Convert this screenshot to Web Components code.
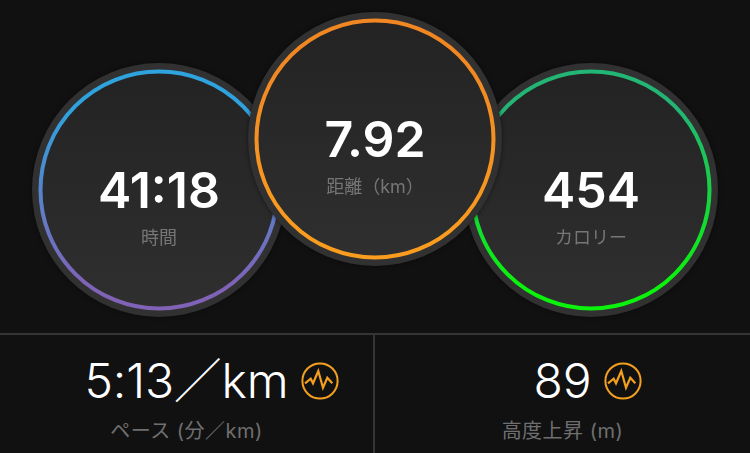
<!DOCTYPE html>
<html lang="ja">
<head>
<meta charset="utf-8">
<style>
  html, body { margin: 0; padding: 0; background: #111112; }
  body { width: 750px; height: 453px; overflow: hidden; font-family: Inter, "Noto Sans CJK JP", sans-serif; }
</style>
</head>
<body>
<stats-screen>
  <stat-ring slot="rings" value="41:18" label="時間" from="#2ea3de" to="#8062b6" style="--top:62px"></stat-ring>
  <stat-ring slot="rings" value="7.92" label="距離（km）" from="#f08723" to="#fa9c1e" style="--top:11px;--over:1"></stat-ring>
  <stat-ring slot="rings" value="454" label="カロリー" from="#22b574" to="#0bf20b" style="--top:62px"></stat-ring>
  <stat-cell slot="cells" value="5:13／km" label="ペース (分／km)"></stat-cell>
  <stat-cell slot="cells" value="89" label="高度上昇 (m)"></stat-cell>
</stats-screen>

<script>
class StatsScreen extends HTMLElement {
  constructor() {
    super();
    this.attachShadow({ mode: "open" });
    this.shadowRoot.innerHTML = `
      <style>
        :host { display: block; width: 750px; height: 453px; color: #fff; }
        .rings { display: flex; justify-content: center; height: 333px; box-sizing: border-box; }
        .cells {
          display: grid;
          grid-template-columns: 375px 1fr;
          height: 120px;
          border-top: 2px solid #353536;
          box-sizing: border-box;
        }
      </style>
      <div class="rings"><slot name="rings"></slot></div>
      <div class="cells"><slot name="cells"></slot></div>
    `;
  }
}

class StatRing extends HTMLElement {
  constructor() {
    super();
    this.attachShadow({ mode: "open" });
  }

  connectedCallback() {
    const value = this.getAttribute("value");
    const label = this.getAttribute("label");
    const from = this.getAttribute("from");
    const to = this.getAttribute("to");
    this.shadowRoot.innerHTML = `
      <style>
        :host {
          display: block;
          position: relative;
          z-index: var(--over, 0);
          flex: none;
          width: 256px;
          height: 256px;
          margin: var(--top) -20px 0;
          filter: drop-shadow(0 0 2px rgba(0,0,0,0.5));
        }
        svg { display: block; }
        .text {
          position: absolute;
          inset: 0;
          display: flex;
          flex-direction: column;
          align-items: center;
          padding-top: 98px;
          box-sizing: border-box;
        }
        .value { font-size: 50px; font-weight: 600; line-height: 60px; }
        .label { font-size: 18px; line-height: 24px; color: #767676; margin-top: 6px; }
      </style>
      <svg width="256" height="256" viewBox="0 0 256 256">
        <defs>
          <linearGradient id="disk" x1="0" y1="0" x2="0" y2="1">
            <stop offset="0" stop-color="#232324"/>
            <stop offset="1" stop-color="#2f2f30"/>
          </linearGradient>
          <linearGradient id="stroke" x1="0" y1="0" x2="0" y2="1">
            <stop offset="0.15" stop-color="${from}"/>
            <stop offset="0.9" stop-color="${to}"/>
          </linearGradient>
        </defs>
        <circle cx="128" cy="128" r="127" fill="#313132"/>
        <circle cx="128" cy="128" r="120" fill="url(#disk)"/>
        <circle cx="128" cy="128" r="118.5" fill="none" stroke="url(#stroke)" stroke-width="4"/>
      </svg>
      <div class="text">
        <div class="value">${value}</div>
        <div class="label">${label}</div>
      </div>
    `;
  }
}

class StatCell extends HTMLElement {
  constructor() {
    super();
    this.attachShadow({ mode: "open" });
  }

  connectedCallback() {
    const value = this.getAttribute("value");
    const label = this.getAttribute("label");
    this.shadowRoot.innerHTML = `
      <style>
        :host { display: block; text-align: center; box-sizing: border-box; }
        :host(:first-of-type) { border-right: 2px solid #353536; }
        .top { display: flex; justify-content: center; height: 60px; margin-top: 16px; }
        .value { position: relative; font-size: 48px; font-weight: 300; line-height: 60px; letter-spacing: -0.2px; }
        .value svg { position: absolute; left: 100%; top: 11px; margin-left: 13px; }
        .label { font-size: 20px; line-height: 26px; color: #6f6f6f; margin-top: 7px; letter-spacing: 0.5px; }
        svg { display: block; }
      </style>
      <div class="top">
        <span class="value">${value}<svg width="38" height="38" viewBox="0 0 38 38" fill="none" stroke="#f3a01f">
          <circle cx="19" cy="19" r="17.6" stroke-width="2"/>
          <path d="M4 21.3 L9.7 16.7 L12 21.3 L17.3 9 L22 25.7 L26.3 15.7 L31.3 21.3" stroke-width="2.2"/>
        </svg></span>
      </div>
      <div class="label">${label}</div>
    `;
  }
}

customElements.define("stats-screen", StatsScreen);
customElements.define("stat-ring", StatRing);
customElements.define("stat-cell", StatCell);
</script>
</body>
</html>
